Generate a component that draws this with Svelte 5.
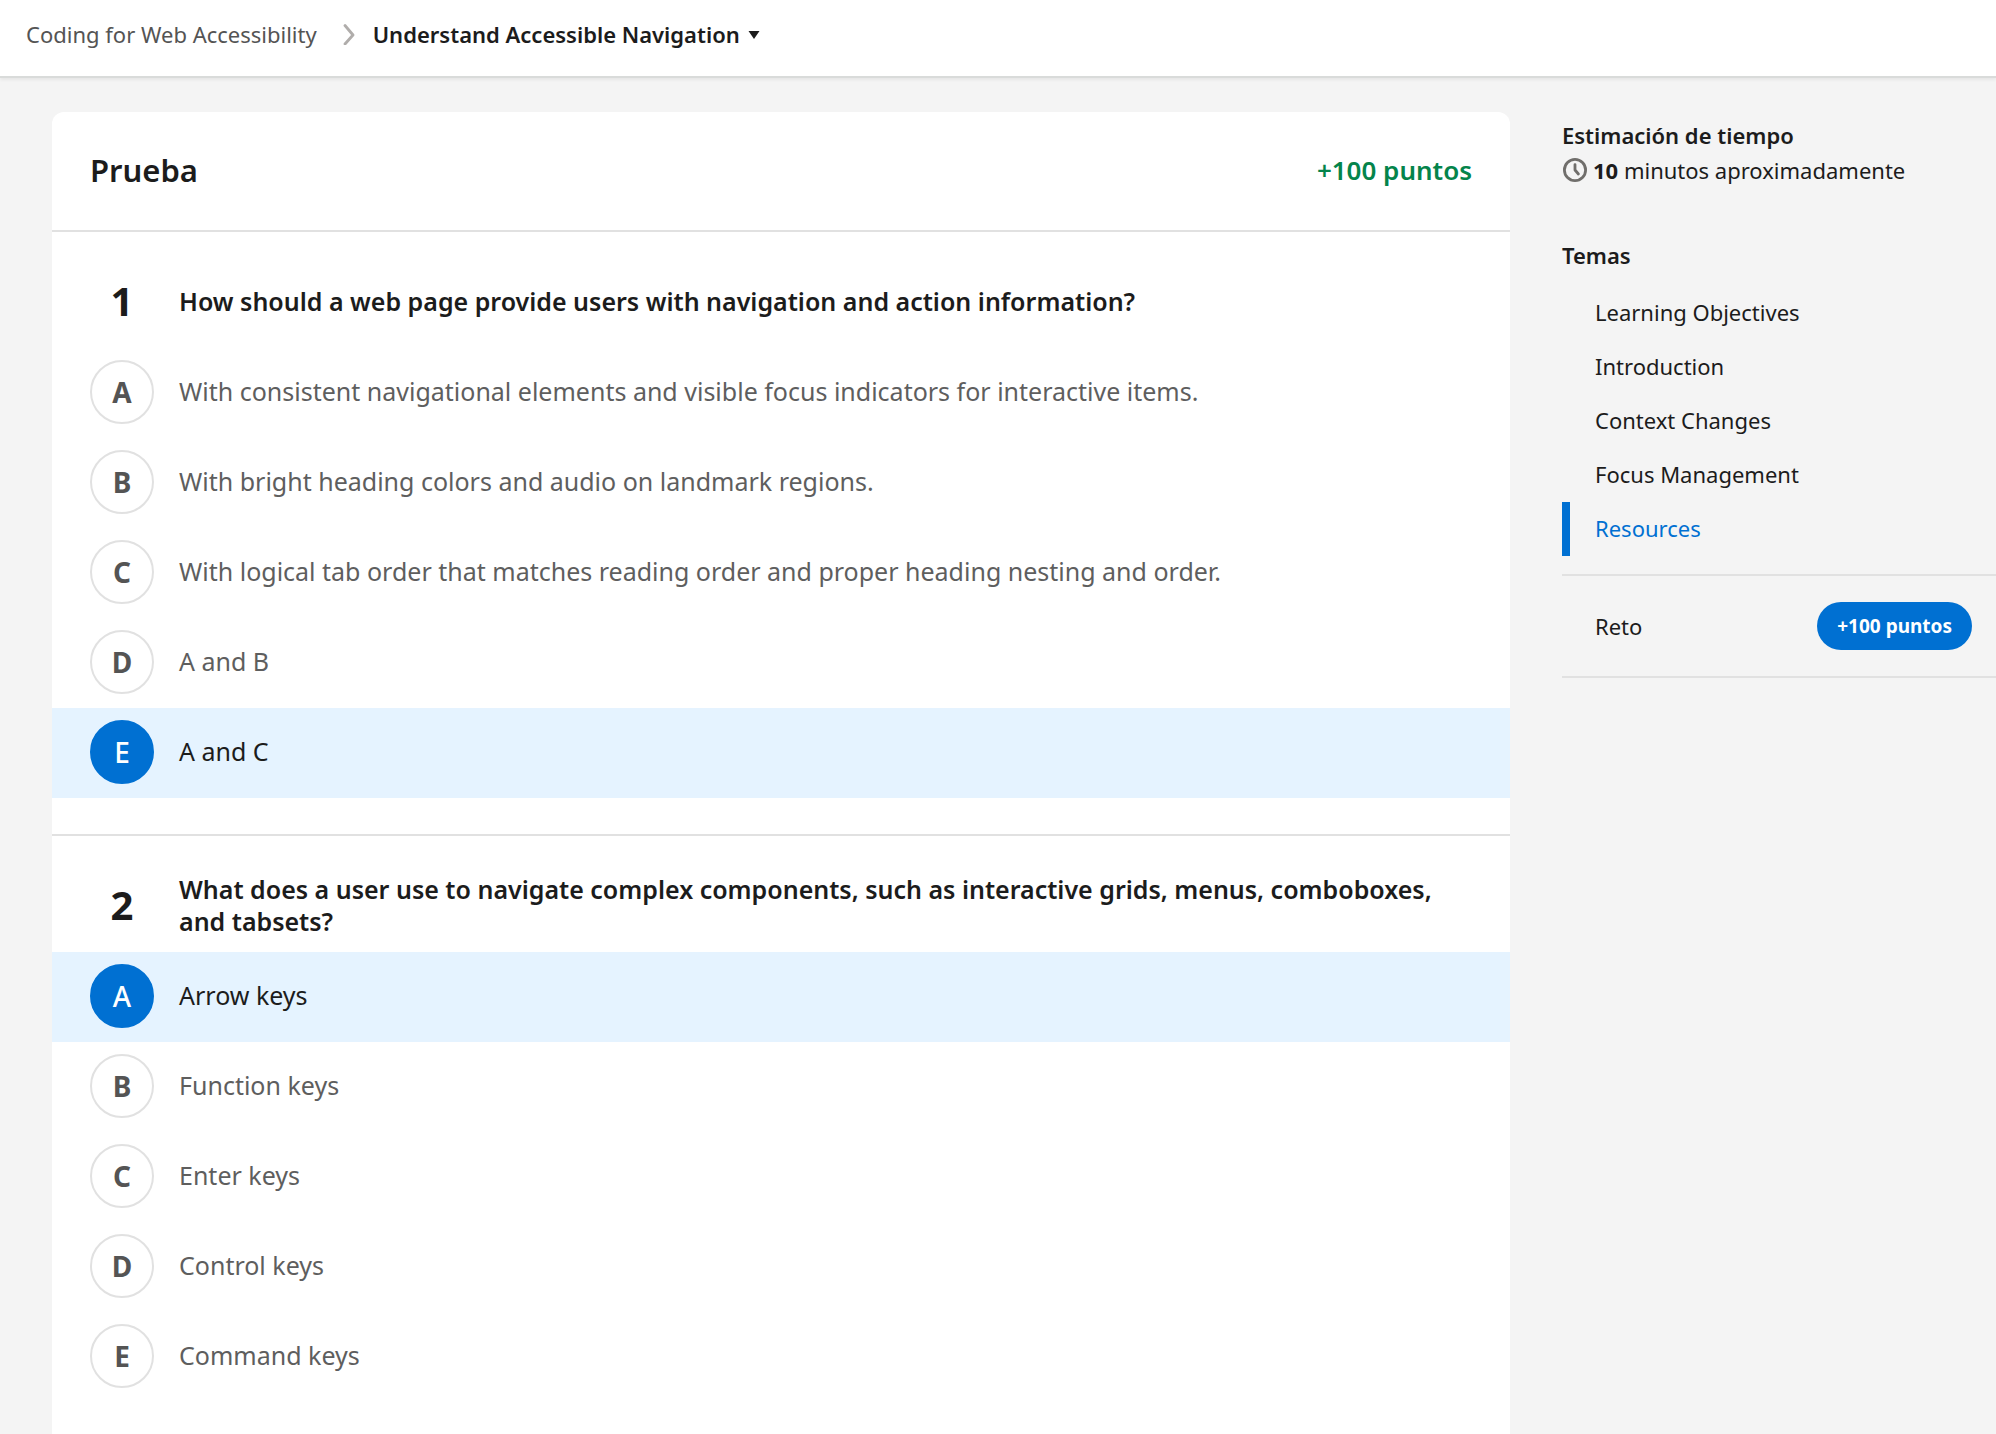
<script>
  const questions = [
    {
      title: 'How should a web page provide users with navigation and action information?',
      options: [
        'With consistent navigational elements and visible focus indicators for interactive items.',
        'With bright heading colors and audio on landmark regions.',
        'With logical tab order that matches reading order and proper heading nesting and order.',
        'A and B',
        'A and C'
      ]
    },
    {
      title:
        'What does a user use to navigate complex components, such as interactive grids, menus, comboboxes, and tabsets?',
      options: ['Arrow keys', 'Function keys', 'Enter keys', 'Control keys', 'Command keys']
    }
  ];
  const topics = [
    'Learning Objectives',
    'Introduction',
    'Context Changes',
    'Focus Management',
    'Resources'
  ];
  let answers = $state([4, 0]);
  let current = $state('Resources');
</script>

<div class="page">
  <header class="topbar">
    <nav class="crumbs" aria-label="Breadcrumb">
      <a class="crumb" href="#module">Coding for Web Accessibility</a>
      <svg class="chevron" width="12" height="22" viewBox="0 0 12 22" aria-hidden="true">
        <path d="M2 2.5 L10 12 L2 21" fill="none" stroke="#b0adab" stroke-width="2.8" stroke-linecap="round" stroke-linejoin="round" />
      </svg>
      <button class="unit" type="button">
        Understand Accessible Navigation
        <svg width="12" height="10" viewBox="0 0 12 10" aria-hidden="true">
          <path d="M0.5 2 H11.5 L6 10 Z" fill="#1c1c1c" />
        </svg>
      </button>
    </nav>
  </header>

  <div class="layout">
    <main class="card">
      <div class="card-head">
        <h1>Prueba</h1>
        <span class="points">+100 puntos</span>
      </div>
      {#each questions as q, qi}
        <section class="question" role="radiogroup" aria-labelledby="q{qi}">
          <div class="q-head">
            <span class="number">{qi + 1}</span>
            <h2 id="q{qi}">{q.title}</h2>
          </div>
          {#each q.options as option, oi}
            <label class="option" class:selected={answers[qi] === oi}>
              <input type="radio" name="question-{qi}" value={oi} bind:group={answers[qi]} />
              <span class="letter">{'ABCDE'[oi]}</span>
              <span class="text">{option}</span>
            </label>
          {/each}
        </section>
      {/each}
    </main>

    <aside class="side">
      <h3>Estimación de tiempo</h3>
      <p class="time">
        <svg width="26" height="24" viewBox="0 0 26 24" aria-hidden="true">
          <circle cx="13" cy="12" r="10.6" fill="none" stroke="#706e6b" stroke-width="2.8" />
          <path d="M13 6.6 V12 L16.4 16" fill="none" stroke="#706e6b" stroke-width="2.8" stroke-linecap="round" stroke-linejoin="round" />
        </svg>
        <span><b>10</b> minutos aproximadamente</span>
      </p>
      <h3 class="topics-title">Temas</h3>
      <ul>
        {#each topics as topic}
          <li>
            <a href="#topic" class:current={topic === current} onclick={() => (current = topic)}>{topic}</a>
          </li>
        {/each}
      </ul>
      <div class="challenge">
        <a href="#challenge">Reto</a>
        <span class="badge">+100 puntos</span>
      </div>
    </aside>
  </div>
</div>

<style>
  :global(body) {
    background: #f4f4f4;
  }
  .page {
    display: flex;
    flex-direction: column;
    min-height: 100vh;
    font-family: 'Noto Sans', 'Open Sans', sans-serif;
    font-size: 22px;
    line-height: 32px;
    color: #1c1c1c;
  }
  h1, h2, h3, p, ul {
    margin: 0;
    padding: 0;
  }
  a {
    color: inherit;
    text-decoration: none;
  }
  .topbar {
    background: #fff;
    border-bottom: 2px solid #d9dbda;
    box-shadow: 0 2px 3px rgba(0, 0, 0, 0.06);
    padding: 18px 26px 26px;
  }
  .crumbs {
    display: flex;
    align-items: center;
  }
  .crumb {
    color: #545454;
  }
  .chevron {
    margin: 0 18px 0 26px;
  }
  .unit {
    display: flex;
    align-items: center;
    gap: 8px;
    padding: 0;
    border: 0;
    background: none;
    font: inherit;
    font-weight: 600;
    color: inherit;
    cursor: pointer;
  }
  .layout {
    flex: 1;
    display: flex;
    gap: 52px;
    padding: 34px 0 0 52px;
  }
  .card {
    flex: 1;
    min-width: 0;
    background: #fff;
    border-radius: 12px 12px 0 0;
  }
  .card-head {
    display: flex;
    align-items: center;
    justify-content: space-between;
    padding: 38px 38px 40px;
    border-bottom: 2px solid #e1e1e1;
  }
  h1 {
    font-size: 31px;
    line-height: 40px;
    font-weight: 650;
  }
  .points {
    font-size: 26px;
    font-weight: 600;
    color: #04844b;
  }
  .question {
    padding: 37px 0 36px;
  }
  .question + .question {
    border-top: 2px solid #e1e1e1;
  }
  .q-head {
    display: flex;
    align-items: center;
    gap: 25px;
    min-height: 64px;
    padding: 0 38px 15px;
  }
  .number {
    flex: none;
    width: 64px;
    text-align: center;
    font-size: 40px;
    font-weight: 700;
  }
  h2 {
    font-size: 25px;
    line-height: 32px;
    font-weight: 650;
  }
  .option {
    display: flex;
    align-items: center;
    gap: 25px;
    padding: 12px 38px 14px;
    font-size: 25px;
    color: #5e5e5e;
    cursor: pointer;
  }
  .option input {
    position: absolute;
    width: 1px;
    height: 1px;
    margin: 0;
    opacity: 0;
  }
  .letter {
    flex: none;
    display: flex;
    align-items: center;
    justify-content: center;
    box-sizing: border-box;
    width: 64px;
    height: 64px;
    border: 2px solid #e1e1e1;
    border-radius: 50%;
    font-size: 28px;
    font-weight: 700;
    color: #545454;
  }
  .selected {
    background: #e5f3ff;
    color: #1c1c1c;
  }
  .selected .letter {
    background: #0070d2;
    border-color: #0070d2;
    color: #fff;
    font-weight: 500;
  }
  .option input:focus-visible + .letter {
    outline: 2px solid #0070d2;
    outline-offset: 2px;
  }
  .text {
    padding-bottom: 2px;
  }
  .side {
    flex: 0 0 434px;
    padding-top: 7px;
  }
  h3 {
    font-size: 22px;
    font-weight: 650;
  }
  .time {
    display: flex;
    align-items: center;
    gap: 5px;
    padding-top: 3px;
  }
  .time b {
    font-weight: 700;
  }
  .topics-title {
    padding: 53px 0 15px;
  }
  ul {
    list-style: none;
    padding-bottom: 18px;
    border-bottom: 2px solid #e1e1e1;
  }
  li a {
    display: block;
    padding: 10px 0 12px 25px;
    border-left: 8px solid transparent;
  }
  li a.current {
    border-color: #0070d2;
    color: #0070d2;
  }
  .challenge {
    display: flex;
    align-items: center;
    justify-content: space-between;
    padding: 26px 24px 26px 33px;
    border-bottom: 2px solid #e1e1e1;
  }
  .badge {
    padding: 8px 20px;
    border-radius: 24px;
    background: #0070d2;
    color: #fff;
    font-size: 19px;
    font-weight: 700;
  }
</style>
